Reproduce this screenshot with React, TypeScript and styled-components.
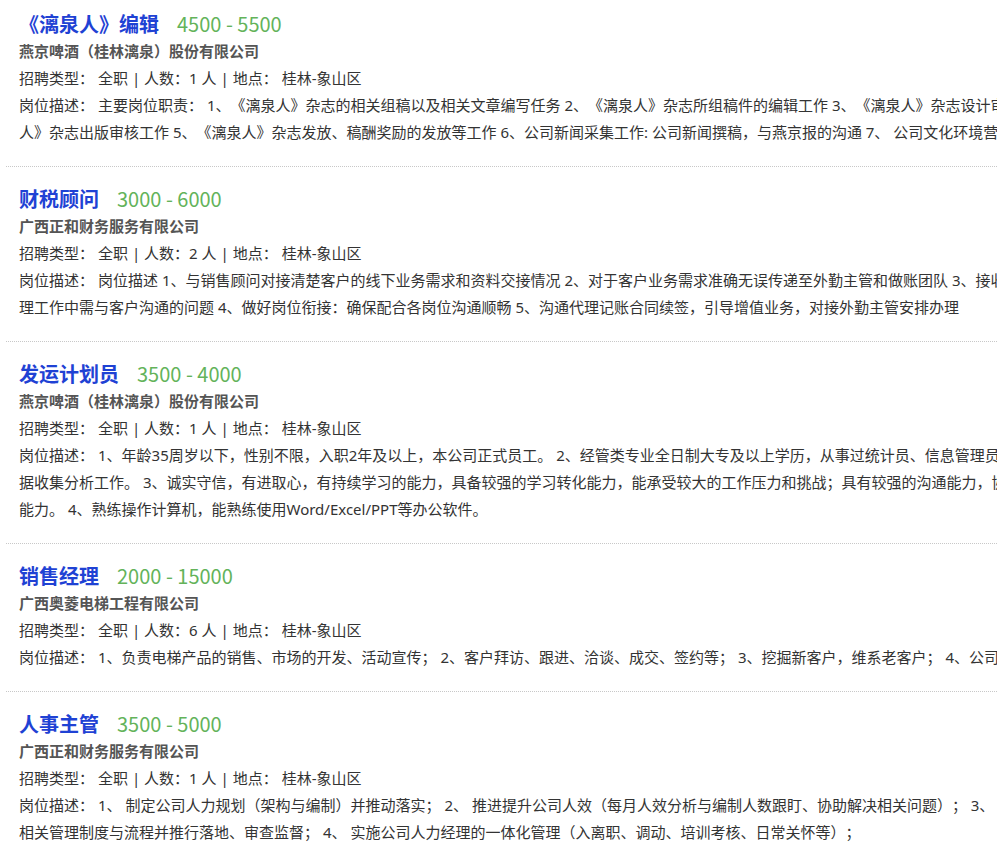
import React from 'react';
import styled, { createGlobalStyle } from 'styled-components';

interface Job {
  title: string;
  salary: string;
  company: string;
  count: number;
  place: string;
  desc: string[];
}

const jobs: Job[] = [
  {
    title: '《漓泉人》编辑',
    salary: '4500 - 5500',
    company: '燕京啤酒（桂林漓泉）股份有限公司',
    count: 1,
    place: '桂林-象山区',
    desc: [
      '主要岗位职责： 1、《漓泉人》杂志的相关组稿以及相关文章编写任务 2、《漓泉人》杂志所组稿件的编辑工作 3、《漓泉人》杂志设计审核工作 4、《漓泉',
      '人》杂志出版审核工作 5、《漓泉人》杂志发放、稿酬奖励的发放等工作 6、公司新闻采集工作: 公司新闻撰稿，与燕京报的沟通 7、 公司文化环境营造',
    ],
  },
  {
    title: '财税顾问',
    salary: '3000 - 6000',
    company: '广西正和财务服务有限公司',
    count: 2,
    place: '桂林-象山区',
    desc: [
      '岗位描述 1、与销售顾问对接清楚客户的线下业务需求和资料交接情况 2、对于客户业务需求准确无误传递至外勤主管和做账团队 3、接收客户在代理记账办',
      '理工作中需与客户沟通的问题 4、做好岗位衔接：确保配合各岗位沟通顺畅 5、沟通代理记账合同续签，引导增值业务，对接外勤主管安排办理',
    ],
  },
  {
    title: '发运计划员',
    salary: '3500 - 4000',
    company: '燕京啤酒（桂林漓泉）股份有限公司',
    count: 1,
    place: '桂林-象山区',
    desc: [
      '1、年龄35周岁以下，性别不限，入职2年及以上，本公司正式员工。 2、经管类专业全日制大专及以上学历，从事过统计员、信息管理员等相关数',
      '据收集分析工作。 3、诚实守信，有进取心，有持续学习的能力，具备较强的学习转化能力，能承受较大的工作压力和挑战；具有较强的沟通能力，协调',
      '能力。 4、熟练操作计算机，能熟练使用Word/Excel/PPT等办公软件。',
    ],
  },
  {
    title: '销售经理',
    salary: '2000 - 15000',
    company: '广西奥菱电梯工程有限公司',
    count: 6,
    place: '桂林-象山区',
    desc: [
      '1、负责电梯产品的销售、市场的开发、活动宣传； 2、客户拜访、跟进、洽谈、成交、签约等； 3、挖掘新客户，维系老客户； 4、公司交办的其他工作。',
    ],
  },
  {
    title: '人事主管',
    salary: '3500 - 5000',
    company: '广西正和财务服务有限公司',
    count: 1,
    place: '桂林-象山区',
    desc: [
      '1、 制定公司人力规划（架构与编制）并推动落实； 2、 推进提升公司人效（每月人效分析与编制人数跟盯、协助解决相关问题）； 3、 建立',
      '相关管理制度与流程并推行落地、审查监督； 4、 实施公司人力经理的一体化管理（入离职、调动、培训考核、日常关怀等）；',
    ],
  },
];

const GlobalStyle = createGlobalStyle`
  html, body {
    margin: 0;
    padding: 0;
    background: #fff;
    overflow-x: hidden;
  }
  body {
    font-family: "Noto Sans", "Noto Sans CJK SC", sans-serif;
    color: #333;
    text-spacing-trim: space-all;
  }
`;

const List = styled.ul`
  list-style: none;
  margin: 0;
  padding: 0 0 0 6px;
`;

const Item = styled.li`
  padding: 18px 0 20px 13px;
  border-bottom: 1px dotted #c8c8c8;

  &:first-child {
    padding-top: 10px;
  }

  &:last-child {
    border-bottom: none;
  }
`;

const TitleRow = styled.div`
  display: flex;
  align-items: baseline;
  gap: 18px;
  height: 28px;
  line-height: 28px;
  white-space: nowrap;
`;

const Title = styled.a`
  font-family: "Noto Sans CJK SC", sans-serif;
  font-size: 20px;
  font-weight: 700;
  color: #1f42d4;
  text-decoration: none;
`;

const Salary = styled.span`
  font-family: "Noto Sans CJK SC", sans-serif;
  font-size: 20px;
  color: #63b35a;
`;

const Company = styled.div`
  font-size: 15px;
  font-weight: 700;
  color: #555;
  line-height: 27px;
`;

const Line = styled.div`
  font-size: 15px;
  line-height: 27px;
  color: #333;
  white-space: nowrap;
`;

const Label = styled.span`
  margin-right: 4px;
`;

const App: React.FC = () => (
  <>
    <GlobalStyle />
    <List>
      {jobs.map((job) => (
        <Item key={job.title}>
          <TitleRow>
            <Title href="#">{job.title}</Title>
            <Salary>{job.salary}</Salary>
          </TitleRow>
          <Company>{job.company}</Company>
          <Line>
            <Label>招聘类型：</Label>
            全职 | 人数：{job.count} 人 | 地点：<Label />
            {job.place}
          </Line>
          {job.desc.map((text, i) => (
            <Line key={i}>
              {i === 0 && <Label>岗位描述：</Label>}
              {text}
            </Line>
          ))}
        </Item>
      ))}
    </List>
  </>
);

export default App;
